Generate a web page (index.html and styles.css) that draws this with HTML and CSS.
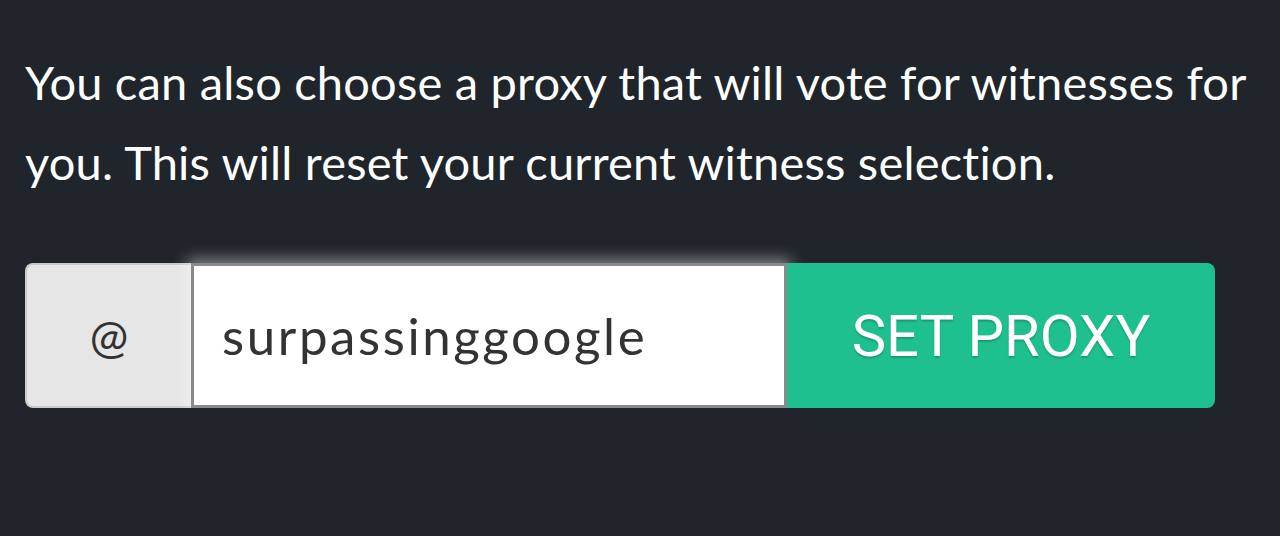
FILE: index.html
```html
<!DOCTYPE html>
<html lang="en">
<head>
  <meta charset="UTF-8" />
  <meta name="viewport" content="width=device-width, initial-scale=1.0" />
  <title>Witness proxy</title>
  <link rel="stylesheet" href="styles.css">
</head>
<body>
  <section class="proxy">
    <p class="proxy-note">You can also choose a proxy that will vote for witnesses for you. This will reset your current witness selection.</p>
    <form class="proxy-form">
      <span class="prefix">@</span>
      <input class="proxy-input" type="text" value="surpassinggoogle">
      <button class="proxy-btn" type="button">SET PROXY</button>
    </form>
  </section>
</body>
</html>
```

FILE: styles.css
```css
* {
  margin: 0;
  padding: 0;
  box-sizing: border-box;
}
body {
  background: #1f252b;
  color: #fff;
  font-family: 'Lato', sans-serif;
}
.proxy {
  padding: 42px 25px 0 25px;
}
.proxy-note {
  font-size: 47px;
  line-height: 80px;
  letter-spacing: 0.2px;
  max-width: 1240px;
}
.proxy-form {
  display: flex;
  margin-top: 61px;
  height: 145px;
  width: 1190px;
}
.prefix {
  width: 166px;
  display: flex;
  align-items: center;
  justify-content: center;
  background: #e6e6e6;
  color: #333;
  border: 2px solid #cacaca;
  border-right: none;
  border-radius: 8px 0 0 8px;
  font-size: 46px;
}
.proxy-input {
  width: 596px;
  border: 3px solid #8a8a8a;
  background: #fff;
  color: #333;
  font-family: 'Lato', sans-serif;
  font-size: 51px;
  letter-spacing: 2.6px;
  padding: 0 0 0 28px;
  box-shadow: 0 0 14px 4px rgba(255, 255, 255, 0.45);
  outline: none;
}
.proxy-btn {
  flex: 1;
  background: #1fc08f;
  color: #fff;
  border: none;
  border-radius: 0 8px 8px 0;
  font-family: 'Roboto', sans-serif;
  font-size: 58px;
  text-shadow: 0 2px 2px rgba(0, 0, 0, 0.2);
}
```
